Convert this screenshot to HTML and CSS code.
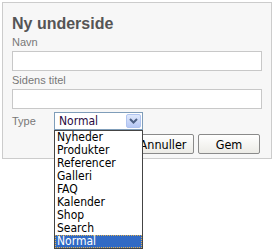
FILE: index.html
```html
<!DOCTYPE html>
<html lang="da">
<head>
    <meta charset="UTF-8">
    <meta name="viewport" content="width=device-width, initial-scale=1.0">
    <title>Ny underside</title>
    <link rel="stylesheet" href="styles.css">
</head>
<body>

    <div class="panel">
        <h1>Ny underside</h1>

        <label class="field-label">Navn</label>
        <input type="text" class="text-input">

        <label class="field-label">Sidens titel</label>
        <input type="text" class="text-input">

        <div class="type-row">
            <span class="type-label">Type</span>
            <div class="select-wrap">
                <div class="select-box">
                    <span class="select-value">Normal</span>
                    <span class="select-arrow">
                        <svg width="9" height="6" viewBox="0 0 9 6">
                            <path d="M1 1 L4.5 4.5 L8 1" fill="none" stroke="#4d6185" stroke-width="2"/>
                        </svg>
                    </span>
                </div>
                <!-- open dropdown list -->
                <ul class="select-list">
                    <li>Nyheder</li>
                    <li>Produkter</li>
                    <li>Referencer</li>
                    <li>Galleri</li>
                    <li>FAQ</li>
                    <li>Kalender</li>
                    <li>Shop</li>
                    <li>Search</li>
                    <li class="selected">Normal</li>
                </ul>
            </div>
        </div>

        <div class="button-row">
            <button class="btn">Annuller</button>
            <button class="btn">Gem</button>
        </div>
    </div>

</body>
</html>
```

FILE: styles.css
```css
* {
    margin: 0;
    padding: 0;
    box-sizing: border-box;
}
html, body {
    min-height: 250px;
}
body {
    font-family: 'Liberation Sans', Arial, sans-serif;
    background: #ffffff;
    padding: 2px 2px 0 2px;
}
.panel {
    position: relative;
    width: 270px;
    height: 157px;
    background: #f7f7f7;
    border: 1px solid #cccccc;
    padding: 12px 10px 0 9px;
}
h1 {
    font-size: 16px;
    font-weight: bold;
    color: #555555;
    line-height: 18px;
    margin-bottom: 3px;
}
.field-label {
    display: block;
    font-size: 11px;
    color: #777777;
    line-height: 13px;
    margin-bottom: 2px;
}
.text-input {
    display: block;
    width: 250px;
    height: 20px;
    border: 1px solid #c8c8c8;
    background: #ffffff;
    margin-bottom: 3px;
}
.type-row {
    display: flex;
    align-items: center;
    margin-top: 3px;
}
.type-label {
    font-size: 11px;
    color: #777777;
    width: 42px;
}
.select-wrap {
    position: relative;
    width: 89px;
}
.select-box {
    display: flex;
    align-items: center;
    height: 18px;
    border: 1px solid #7f9db9;
    background: #ffffff;
    padding: 1px;
}
.select-value {
    flex: 1;
    font-family: 'DejaVu Sans Condensed', 'DejaVu Sans', sans-serif;
    font-size: 12px;
    line-height: 14px;
    color: #2a0a40;
    padding-left: 3px;
}
.select-arrow {
    display: flex;
    align-items: center;
    justify-content: center;
    width: 15px;
    height: 14px;
    background: linear-gradient(#dfe8fb, #b6c8f5);
    border: 1px solid #b0c4f0;
    border-radius: 2px;
}
.select-list {
    position: absolute;
    top: 18px;
    left: 0;
    width: 89px;
    list-style: none;
    background: #ffffff;
    border: 1px solid #444444;
    font-family: 'DejaVu Sans Condensed', 'DejaVu Sans', sans-serif;
    font-size: 12px;
    z-index: 2;
}
.select-list li {
    height: 13px;
    line-height: 13px;
    padding-left: 2px;
    color: #000000;
}
.select-list li.selected {
    background: #316ac5;
    color: #ffffff;
    outline: 1px dotted #e0b050;
    outline-offset: -1px;
}
.button-row {
    display: flex;
    justify-content: flex-end;
    gap: 4px;
    margin-top: 4px;
    padding-right: 1px;
}
.btn {
    width: 62px;
    height: 20px;
    font-family: 'DejaVu Sans Condensed', 'DejaVu Sans', sans-serif;
    font-size: 12.5px;
    color: #000000;
    background: linear-gradient(#ffffff, #ecebe6);
    border: 1px solid #8a8a8a;
    border-radius: 2px;
}
```
